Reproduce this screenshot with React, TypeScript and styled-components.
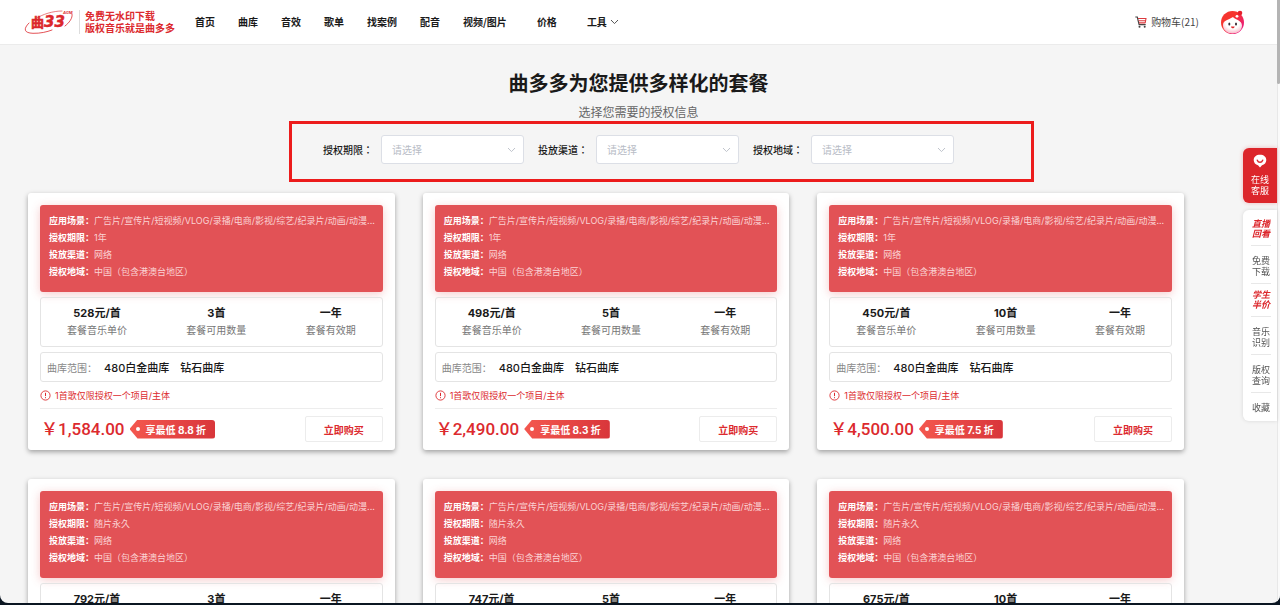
import React from "react";
import styled, { createGlobalStyle, css } from "styled-components";

const GlobalStyle = createGlobalStyle`
  *, *::before, *::after { box-sizing: border-box; }
  body {
    margin: 0;
    background: #0b1622;
    font-family: Inter, "Noto Sans CJK SC", sans-serif;
    font-size: 10px;
    color: #1a1a1a;
  }
  a { color: inherit; text-decoration: none; }
  button, select { font-family: inherit; }
`;

const Window = styled.div`
  display: flex;
  height: calc(100vh - 2px);
  overflow: hidden;
  background: #f5f5f5;
  border-radius: 0 0 8px 8px;
`;

const Page = styled.div`
  flex: 1;
  min-width: 0;
`;

const ScrollTrack = styled.div`
  width: 3px;
  background: #fafafa;
  border-left: 1px solid #e8e8e8;
`;

const ScrollThumb = styled.div`
  height: 14%;
  margin-left: -1px;
  background: #b4b4b4;
  border-radius: 0 0 2px 2px;
`;

const Header = styled.header`
  display: flex;
  align-items: center;
  height: 45px;
  padding: 0 32px 0 24px;
  background: #fff;
  border-bottom: 1px solid #ebebeb;
`;

const Brand = styled.a`
  display: flex;
  align-items: center;
  gap: 5px;
`;

const Slogan = styled.span`
  padding-left: 5px;
  border-left: 1px solid #ddd;
  color: #dc2a2e;
  font-family: "Noto Sans CJK SC", sans-serif;
  font-weight: 700;
  line-height: 12px;
  white-space: nowrap;
`;

const Nav = styled.nav`
  display: flex;
  gap: 23px;
  margin-left: 20px;
  flex: 1;
  font-family: "Noto Sans CJK SC", sans-serif;
  font-weight: 700;
  line-height: 16px;
  white-space: nowrap;
`;

const NavLink = styled.a<{ $wide?: boolean }>`
  display: flex;
  align-items: center;
  gap: 3px;
  margin-right: ${(p) => (p.$wide ? 7 : 0)}px;
`;

const Cart = styled.a`
  display: flex;
  align-items: center;
  gap: 4px;
  margin-right: 21px;
  font-family: "Noto Sans CJK SC", sans-serif;
  line-height: 16px;
  color: #444;
`;

const Main = styled.main`
  padding-top: 24px;
`;

const Title = styled.h1`
  margin: 0;
  font-family: "Noto Sans CJK SC", sans-serif;
  font-size: 20px;
  line-height: 28px;
  text-align: center;
`;

const Subtitle = styled.p`
  margin: 7px 0 0;
  font-size: 12px;
  line-height: 18px;
  text-align: center;
  color: #666;
`;

const Filters = styled.form`
  position: relative;
  display: flex;
  gap: 14px;
  width: fit-content;
  margin: 13px auto 29px;

  &::after {
    content: "";
    position: absolute;
    inset: -14px -80px -18px -34px;
    border: 3px solid #ec1c1c;
    pointer-events: none;
  }
`;

const Filter = styled.label`
  display: flex;
  align-items: center;
  gap: 8px;
  font-weight: 500;
  white-space: nowrap;
`;

const Colon = styled.span`
  font-family: "Noto Sans CJK TC", sans-serif;
`;

const SelectBox = styled.span`
  display: grid;
  grid-template-columns: 1fr 24px;
  align-items: center;
  width: 143px;
  height: 29px;
  background: #fff;
  border: 1px solid #dcdfe6;
  border-radius: 3px;

  svg { grid-area: 1 / 2; pointer-events: none; margin-left: 8px; }
`;

const Select = styled.select`
  grid-area: 1 / 1 / 2 / 3;
  height: 27px;
  padding: 0 24px 0 10px;
  appearance: none;
  border: 0;
  background: transparent;
  color: #b8bcc6;
  font-size: 10px;
`;

const Cards = styled.section`
  display: grid;
  grid-template-columns: repeat(3, 1fr);
  gap: 29px 28px;
  padding: 0 93px 0 28px;
`;

const Card = styled.article`
  min-width: 0;
  padding: 12px 12px 8px;
  background: #fff;
  border-radius: 3px;
  box-shadow: 0 2px 5px rgba(0, 0, 0, 0.35);
`;

const Terms = styled.dl`
  height: 87px;
  margin: 0 0 5px;
  padding: 7px 5px 0 9px;
  border-radius: 3px;
  background: #e25256;
  box-shadow: 0 2px 10px rgba(226, 82, 86, 0.3);
  color: #fff;
  font-size: 9px;
  line-height: 17px;
`;

const Term = styled.div`
  display: flex;

  dt { flex: none; font-weight: 700; }
  dd {
    margin: 0;
    overflow: hidden;
    text-overflow: ellipsis;
    white-space: nowrap;
    color: #fbd3d4;
  }
`;

const boxed = css`
  border: 1px solid #e4e4e4;
  border-radius: 3px;
`;

const Stats = styled.div`
  ${boxed}
  display: flex;
  justify-content: space-between;
  height: 50px;
  margin-bottom: 5px;
  padding: 7px 26px 0;
`;

const Stat = styled.div`
  display: flex;
  flex-direction: column;
  align-items: center;
  line-height: 17px;
  color: #777;

  strong { font-size: 11px; color: #1a1a1a; }
`;

const Library = styled.div`
  ${boxed}
  display: flex;
  align-items: center;
  height: 30px;
  padding: 0 6px;
`;

const LibraryLabel = styled.span`
  margin-right: 7px;
  color: #888;
`;

const LibraryName = styled.span`
  margin-right: 11px;
  font-size: 11px;
  font-weight: 500;
`;

const Notice = styled.p`
  display: flex;
  align-items: center;
  gap: 4px;
  height: 26px;
  margin: 0;
  font-size: 9px;
  color: #dc2a2e;
`;

const CardFooter = styled.footer`
  display: flex;
  align-items: center;
  padding: 7px 0 0 1px;
  border-top: 1px solid #ededed;
`;

const Price = styled.span`
  margin-right: 5px;
  font-family: Roboto, "Noto Sans CJK SC", sans-serif;
  font-size: 17px;
  font-weight: 500;
  line-height: 20px;
  color: #dc2a2e;
`;

const Discount = styled.span`
  display: flex;
  align-items: center;
  gap: 6px;
  height: 19px;
  padding: 0 9px 0 6px;
  border-radius: 0 3px 3px 0;
  background: linear-gradient(100deg, #f4584f, #d8353a);
  clip-path: polygon(0 50%, 8px 0, 100% 0, 100% 100%, 8px 100%);
  color: #fff;
  font-weight: 700;
  white-space: nowrap;

  &::before {
    content: "";
    width: 4px;
    height: 4px;
    border-radius: 50%;
    background: #fff;
  }
`;

const BuyButton = styled.button`
  width: 78px;
  height: 26px;
  margin-left: auto;
  padding: 0;
  border: 1px solid #ececec;
  border-radius: 2px;
  background: #fff;
  color: #dc2a2e;
  font-size: 10px;
  font-weight: 700;
`;

const Dock = styled.aside`
  position: fixed;
  top: 148px;
  right: 3px;
  width: 34px;
  font-size: 9px;
  line-height: 11px;
  text-align: center;
`;

const Support = styled.button`
  display: flex;
  flex-direction: column;
  align-items: center;
  gap: 6px;
  width: 100%;
  height: 55px;
  margin-bottom: 7px;
  padding: 6px 6px 0;
  border: 0;
  border-radius: 6px 0 0 6px;
  background: #dc262b;
  box-shadow: 0 0 4px rgba(220, 38, 43, 0.3);
  color: #fff;
  font-size: 9px;
  line-height: 11px;
`;

const DockList = styled.div`
  padding: 3px 6px 2px 8px;
  border-radius: 6px 0 0 6px;
  background: #fff;
  box-shadow: 0 0 4px rgba(0, 0, 0, 0.12);
`;

const DockLink = styled.a<{ $promo?: boolean }>`
  display: block;
  padding: 9px 1px 6px;
  border-bottom: 1px solid #e8e8e8;
  color: #555;

  &:last-child { border-bottom: 0; }

  ${(p) =>
    p.$promo &&
    css`
      padding: 6px 1px;
      color: #dc262b;
      font-style: italic;
      font-weight: 700;
      line-height: 10px;
    `}
`;

const Chevron = ({ color }: { color: string }) => (
  <svg width="9" height="6" viewBox="0 0 9 6" fill="none" stroke={color} aria-hidden="true">
    <path d="M1 1l3.500 3.600L8 1" />
  </svg>
);

const Logo = () => (
  <svg width="50" height="28" viewBox="0 0 50 28" role="img" aria-label="曲多多">
    <g fill="none" stroke="#dc262b" strokeLinecap="round">
      <path d="M5 15C-1 21 0 25 9 25.300C16 25.500 23 24 28 22" strokeWidth=".8" />
      <path d="M11 11C19 6 29 3 38 3" strokeWidth=".6" />
      <path d="M48 6C49 10 45 15 41 18" strokeWidth=".8" />
    </g>
    <g fill="#dc262b" fontWeight="700">
      <text x="7" y="19" fontSize="13" stroke="#dc262b" strokeWidth=".6" fontFamily="Noto Sans CJK SC">曲</text>
      <text x="20" y="19" fontSize="15" stroke="#dc262b" strokeWidth=".5" fontFamily="DejaVu Sans" fontStyle="italic">33</text>
      <text x="39" y="6" fontSize="4" fontFamily="Inter" fontStyle="italic">AGM</text>
    </g>
  </svg>
);

const CartIcon = () => (
  <svg width="12" height="12" viewBox="0 0 12 12" fill="none" aria-hidden="true">
    <path d="M.3 1h2l1.800 7.700h6.600" stroke="#444" strokeWidth="1.200" />
    <path d="M3 2.500h8.500M3.500 4.800h7.400M10.400 6.900H4M11 2.500l-.8 4.400" stroke="#dc3a3e" strokeWidth="1.100" />
    <circle cx="4.500" cy="10.700" r="1" fill="#444" />
    <circle cx="9.700" cy="10.700" r="1" fill="#444" />
  </svg>
);

const Avatar = () => (
  <svg width="25" height="25" viewBox="0 0 25 25" role="img" aria-label="我的账号">
    <defs>
      <linearGradient id="hair" x1="0" y1="0" x2="1" y2="1">
        <stop offset=".4" stopColor="#f6352f" />
        <stop offset="1" stopColor="#e6129a" />
      </linearGradient>
      <radialGradient id="face" cx=".5" cy=".35" r=".65">
        <stop offset=".55" stopColor="#fff" />
        <stop offset="1" stopColor="#f9b9c8" />
      </radialGradient>
    </defs>
    <circle cx="12.500" cy="12.500" r="11.500" fill="url(#hair)" />
    <path d="M3 15C3 10.500 8 10 13 7c2 3 9 3 9 8.500 0 5-4.500 8-9.500 8S3 20.500 3 15z" fill="url(#face)" />
    <circle cx="20" cy="3" r="2.300" fill="#e6202c" />
    <circle cx="17" cy="6.300" r="1.400" fill="#fff" />
    <ellipse cx="9.300" cy="14" rx="1" ry="1.600" fill="#3a2a35" />
    <ellipse cx="16" cy="14" rx="1" ry="1.600" fill="#3a2a35" />
    <path d="M11 16.500h3.600c0 2.400-3.600 2.400-3.600 0z" fill="#e0262c" />
  </svg>
);

const ChatIcon = () => (
  <svg width="14" height="14" viewBox="0 0 14 14" aria-hidden="true">
    <path d="M7 .8c3.700 0 6.300 2 6.300 5.300 0 2.700-1.800 4.600-4.300 5.200L7 13.500l-2-2.200C2.500 10.700.7 8.800.7 6.100.7 2.800 3.300.8 7 .8z" fill="#fff" />
    <path d="M4.300 6.200C5.300 9 8.700 9 9.700 6.200" fill="none" stroke="#dc262b" strokeWidth="1.400" strokeLinecap="round" />
  </svg>
);

const WarningIcon = () => (
  <svg width="11" height="11" viewBox="0 0 11 11" fill="none" stroke="#dc2a2e" aria-hidden="true">
    <circle cx="5.500" cy="5.500" r="4.600" strokeWidth=".9" />
    <path d="M5.500 2.800v3.300M5.500 7.200v1" />
  </svg>
);

const navItems = [
  { label: "首页" },
  { label: "曲库" },
  { label: "音效" },
  { label: "歌单" },
  { label: "找案例" },
  { label: "配音" },
  { label: "视频/图片", wide: true },
  { label: "价格", wide: true },
  { label: "工具", menu: true },
];

const filters = ["授权期限", "投放渠道", "授权地域"];

const packages = [
  { unit: "528", count: 3, period: "1年", price: "1,584.00", discount: "8.8" },
  { unit: "498", count: 5, period: "1年", price: "2,490.00", discount: "8.3" },
  { unit: "450", count: 10, period: "1年", price: "4,500.00", discount: "7.5" },
  { unit: "792", count: 3, period: "随片永久", price: "2,376.00", discount: "8.8" },
  { unit: "747", count: 5, period: "随片永久", price: "3,735.00", discount: "8.3" },
  { unit: "675", count: 10, period: "随片永久", price: "6,750.00", discount: "7.5" },
];

const dockItems = [
  { lines: ["直播", "回看"], promo: true },
  { lines: ["免费", "下载"] },
  { lines: ["学生", "半价"], promo: true },
  { lines: ["音乐", "识别"] },
  { lines: ["版权", "查询"] },
  { lines: ["收藏"] },
];

const PackageCard = ({ item }: { item: (typeof packages)[number] }) => (
  <Card>
    <Terms>
      <Term>
        <dt>应用场景：</dt>
        <dd>广告片/宣传片/短视频/VLOG/录播/电商/影视/综艺/纪录片/动画/动漫...</dd>
      </Term>
      <Term>
        <dt>授权期限：</dt>
        <dd>{item.period}</dd>
      </Term>
      <Term>
        <dt>投放渠道：</dt>
        <dd>网络</dd>
      </Term>
      <Term>
        <dt>授权地域：</dt>
        <dd>中国（包含港澳台地区）</dd>
      </Term>
    </Terms>
    <Stats>
      <Stat>
        <strong>{item.unit}元/首</strong>
        <span>套餐音乐单价</span>
      </Stat>
      <Stat>
        <strong>{item.count}首</strong>
        <span>套餐可用数量</span>
      </Stat>
      <Stat>
        <strong>一年</strong>
        <span>套餐有效期</span>
      </Stat>
    </Stats>
    <Library>
      <LibraryLabel>曲库范围：</LibraryLabel>
      <LibraryName>480白金曲库</LibraryName>
      <LibraryName>钻石曲库</LibraryName>
    </Library>
    <Notice>
      <WarningIcon />
      1首歌仅限授权一个项目/主体
    </Notice>
    <CardFooter>
      <Price>￥{item.price}</Price>
      <Discount>享最低 {item.discount} 折</Discount>
      <BuyButton type="button">立即购买</BuyButton>
    </CardFooter>
  </Card>
);

export default function App() {
  return (
    <>
      <GlobalStyle />
      <Window>
        <Page>
          <Header>
            <Brand href="#">
              <Logo />
              <Slogan>
                免费无水印下载
                <br />
                版权音乐就是曲多多
              </Slogan>
            </Brand>
            <Nav>
              {navItems.map((n) => (
                <NavLink href="#" key={n.label} $wide={n.wide}>
                  {n.label}
                  {n.menu && <Chevron color="#555" />}
                </NavLink>
              ))}
            </Nav>
            <Cart href="#">
              <CartIcon />
              购物车(21)
            </Cart>
            <Avatar />
          </Header>
          <Main>
            <Title>曲多多为您提供多样化的套餐</Title>
            <Subtitle>选择您需要的授权信息</Subtitle>
            <Filters>
              {filters.map((f) => (
                <Filter key={f}>
                  <span>
                    {f}
                    <Colon>：</Colon>
                  </span>
                  <SelectBox>
                    <Select defaultValue="">
                      <option value="">请选择</option>
                    </Select>
                    <Chevron color="#c0c4cc" />
                  </SelectBox>
                </Filter>
              ))}
            </Filters>
            <Cards>
              {packages.map((p) => (
                <PackageCard key={p.unit} item={p} />
              ))}
            </Cards>
          </Main>
        </Page>
        <ScrollTrack>
          <ScrollThumb />
        </ScrollTrack>
      </Window>
      <Dock>
        <Support type="button">
          <ChatIcon />
          <span>
            在线
            <br />
            客服
          </span>
        </Support>
        <DockList>
          {dockItems.map((d) => (
            <DockLink href="#" key={d.lines.join("")} $promo={d.promo}>
              {d.lines.map((line) => (
                <div key={line}>{line}</div>
              ))}
            </DockLink>
          ))}
        </DockList>
      </Dock>
    </>
  );
}
